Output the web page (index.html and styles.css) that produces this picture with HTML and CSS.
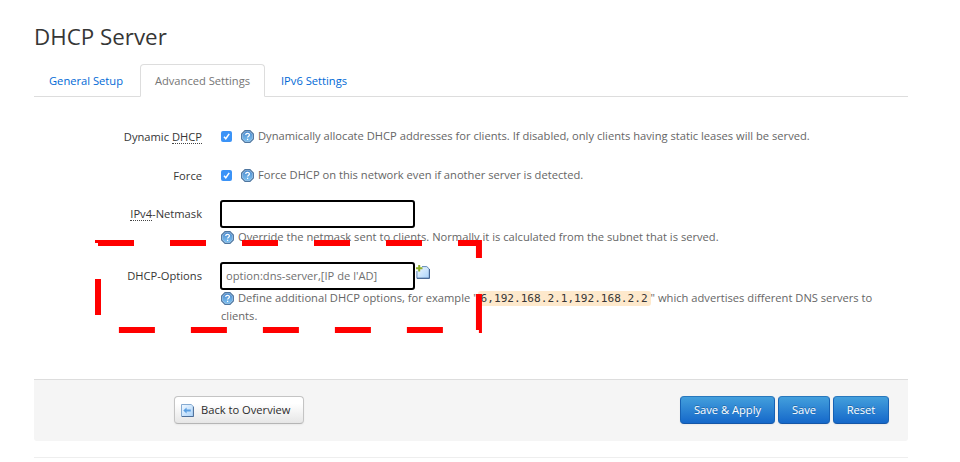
FILE: index.html
```html
<!DOCTYPE html>
<html lang="en">
<head>
<meta charset="utf-8">
<title>DHCP Server</title>
<link rel="stylesheet" href="styles.css">
</head>
<body>
<svg class="defs" width="0" height="0" aria-hidden="true">
  <defs>
    <linearGradient id="blue" x1="0" y1="0" x2="0" y2="1"><stop offset="0" stop-color="#4c8bce"/><stop offset="1" stop-color="#7dc0f0"/></linearGradient>
    <linearGradient id="page" x1="0" y1="0" x2="1" y2="1"><stop offset="0" stop-color="#f2f9ff"/><stop offset="1" stop-color="#a9d2fa"/></linearGradient>
    <symbol id="help" viewBox="0 0 13 13">
      <path d="M4 .6h5L12.4 4v5L9 12.4H4L.6 9V4z" fill="#b5d0ea" stroke="#4f769f" stroke-width="1.1"/>
      <path d="M4.4 1.6h4.2l2.8 2.8v4.2l-2.8 2.8H4.4L1.6 8.6V4.4z" fill="url(#blue)"/>
      <path d="M4.7 5.1c0-2.3 3.7-2.2 3.7-.2 0 1.3-1.8 1.2-1.8 2.6M6.6 8.7v1.2" fill="none" stroke="#fff" stroke-width="1.25"/>
    </symbol>
  </defs>
</svg>
<main class="page">
  <h1>DHCP Server</h1>
  <nav class="tabs">
    <a class="tab">General Setup</a>
    <a class="tab active">Advanced Settings</a>
    <a class="tab">IPv6 Settings</a>
  </nav>
  <form class="form">
    <div class="row check-row">
      <label>Dynamic <abbr>DHCP</abbr></label>
      <div class="field check-field">
        <svg class="check" viewBox="0 0 11 11"><rect width="11" height="11" rx="2"/><path d="M3 5.8l1.8 2L8.2 2.9"/></svg>
        <svg class="help"><use href="#help"/></svg>
        <span class="desc">Dynamically allocate DHCP addresses for clients. If disabled, only clients having static leases will be served.</span>
      </div>
    </div>
    <div class="row check-row">
      <label>Force</label>
      <div class="field check-field">
        <svg class="check" viewBox="0 0 11 11"><rect width="11" height="11" rx="2"/><path d="M3 5.8l1.8 2L8.2 2.9"/></svg>
        <svg class="help"><use href="#help"/></svg>
        <span class="desc">Force DHCP on this network even if another server is detected.</span>
      </div>
    </div>
    <div class="row mask-row">
      <label><abbr>IPv4</abbr>-Netmask</label>
      <div class="field">
        <input type="text" aria-label="IPv4-Netmask">
        <p class="desc"><svg class="help"><use href="#help"/></svg>Override the netmask sent to clients. Normally it is calculated from the subnet that is served.</p>
      </div>
    </div>
    <div class="row options-row">
      <label>DHCP-Options</label>
      <div class="field">
        <div class="input-line">
          <input type="text" placeholder="option:dns-server,[IP de l'AD]">
          <svg class="add" viewBox="0 0 14 14"><path d="M2.5 1.6h8.3l2.6 2.5v9.2H.9V5" fill="url(#page)"/><path d="M.9 6v7.3h12.5V4.1L10.8 1.6H6" fill="none" stroke="#6288b5"/><path d="M13.4 4v9.3H1" fill="none" stroke="#41618f"/><path d="M3.2 0v6.6M0 3.3h6.5" stroke="#8fae2b" stroke-width="2"/></svg>
        </div>
        <p class="desc"><svg class="help"><use href="#help"/></svg>Define additional DHCP options, for example "<code>6,192.168.2.1,192.168.2.2</code>" which advertises different DNS servers to<br>clients.</p>
      </div>
    </div>
  </form>
  <div class="actions">
    <button class="btn back"><svg viewBox="0 0 13 13"><path d="M.5.5h9.7l2.3 2.3v9.7H.5z" fill="url(#page)" stroke="#86abd2"/><path d="M12.4 2.7v9.8H1" fill="none" stroke="#4e6e98"/><path d="M2.3 6.5l3.3-3v2h4.2v2H5.6v2z" fill="#5b9fe2"/></svg>Back to Overview</button>
    <div class="primary-group">
      <button class="btn primary apply">Save &amp; Apply</button>
      <button class="btn primary save">Save</button>
      <button class="btn primary reset">Reset</button>
    </div>
  </div>
  <footer></footer>
</main>
<svg class="highlight" width="400" height="100" viewBox="90 236 400 100"><path d="M98 243H478.95V330H98V243"/><path class="corner" d="M95 240h3v3h-3z"/></svg>
</body>
</html>
```

FILE: styles.css
```css
* { box-sizing: border-box; }
body { margin: 0; height: 462px; overflow: hidden; background: #fff; color: #363636; font: 11.17px/18px "Open Sans", sans-serif; }
.defs { position: absolute; }
.page { width: 874px; margin-left: 34px; padding-top: 19px; }
h1 { margin: 0; height: 45px; font-size: 22.35px; line-height: 35px; font-weight: 400; color: #363636; }
.tabs { display: flex; height: 33px; border-bottom: 1px solid #ddd; }
.tab { height: 33px; padding: 0 15px; line-height: 34px; color: #0069d6; white-space: nowrap; }
.tab.active { width: 125px; margin: 0 1px 0 0; padding: 0; text-align: center; color: #757575; background: #fff; border: 1px solid #ddd; border-bottom-color: #fff; border-radius: 4px 4px 0 0; line-height: 32px; }
.tab:first-child { width: 106px; }
.form { height: 282px; padding-top: 29px; }
.row { display: flex; gap: 18px; }
.row label { width: 168px; flex: none; text-align: right; padding-top: 2px; line-height: 17px; }
.check-row { height: 39px; }
.mask-row { height: 62px; }
.mask-row label { padding-top: 1px; }
.options-row label { padding-top: 1px; }
abbr { display: inline-block; line-height: 13px; border-bottom: 1px dotted #444; }
.check-field { display: flex; align-items: center; height: 20px; }
.check { width: 11px; height: 11px; margin: 0 10px 0 1px; }
.field { padding-left: 0; }
.check rect { fill: #3b93f7; }
.check path { fill: none; stroke: #fff; stroke-width: 1.5; }
.help { width: 13px; height: 13px; flex: none; vertical-align: -3px; margin-right: 4px; }
.check-field .help { margin: 1px 4px 0 -1px; }
.check-field .desc { margin-top: -1px; }
.desc { margin: 0; color: #666; white-space: nowrap; }
p.desc { line-height: 17.5px; padding-left: 1px; }
input { display: block; width: 195px; height: 28px; padding: 0 4px 1px; border: 2px solid #000; border-radius: 3px; background: #fff; font: inherit; margin: -4px 0 0; }
input::placeholder { color: #707070; opacity: 1; }
.input-line { display: flex; }
.add { width: 14px; height: 14px; margin-left: 1px; margin-top: -1px; }
.options-row p.desc { margin-top: -1px; }
code { padding: 1px 3px; border-radius: 3px; background: #fee9cc; color: #363636; font: 11.1px/14px "DejaVu Sans Mono", monospace; }
.actions { display: flex; justify-content: space-between; height: 62px; padding: 16px 19px 0 140px; background: #f5f5f5; border-top: 1px solid #ddd; border-radius: 0 0 3px 3px; }
.btn { height: 28px; padding: 0 0 1px; border: 1px solid #c4c4c4; border-bottom-color: #b5b5b5; border-radius: 4px; font: 11.17px/16px "Open Sans", sans-serif; color: #2c2c2c; box-shadow: 0 1px 2px rgba(0,0,0,.05); white-space: nowrap; }
.back { display: flex; align-items: center; width: 130px; padding-left: 6px; background: linear-gradient(#fff, #fff 25%, #e6e6e6); }
.back svg { width: 13px; height: 13px; margin: 1px 7px 0 0; }
.primary-group { display: flex; gap: 3px; }
.primary { color: #fff; background: linear-gradient(#439fdc, #1568ca); border-color: #2878bd #1762b4 #1456a7; text-shadow: 0 -1px 0 rgba(0,0,0,.25); }
.apply { width: 95px; }
.save { width: 52px; }
.reset { width: 56px; }
footer { margin-top: 16px; border-top: 1px solid #eee; }
.highlight { position: absolute; left: 90px; top: 236px; pointer-events: none; }
.highlight path { fill: none; stroke: #f00; stroke-width: 6; stroke-dasharray: 36 36; }
.highlight .corner { fill: #f00; stroke: none; }
```
